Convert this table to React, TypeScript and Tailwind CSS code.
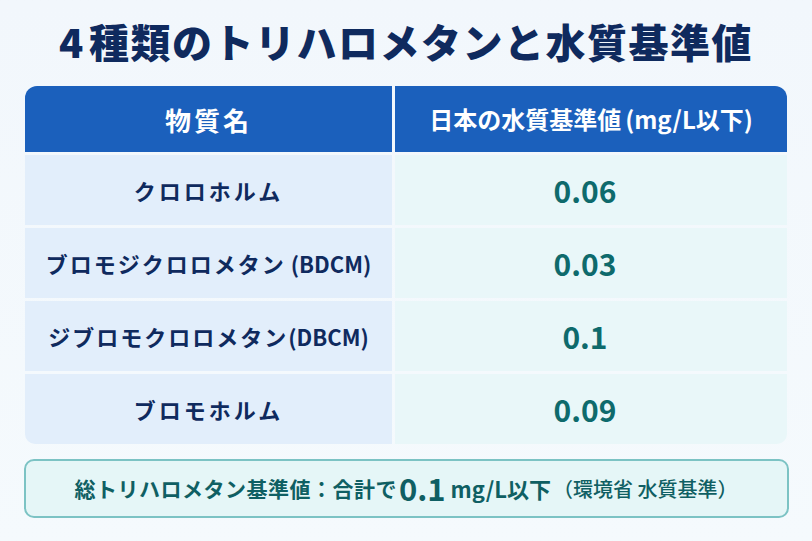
import React from "react";

const rows = [
  { name: "クロロホルム", suffix: "", value: "0.06", track: "tracking-[3px]" },
  { name: "ブロモジクロロメタン", suffix: " (BDCM)", value: "0.03", track: "tracking-[2px]" },
  { name: "ジブロモクロロメタン", suffix: "(DBCM)", value: "0.1", track: "tracking-[2px]" },
  { name: "ブロモホルム", suffix: "", value: "0.09", track: "tracking-[3px]" },
];

export default function App() {
  return (
    <div
      className="w-[812px] h-[541px] bg-gradient-to-b from-[#f2f7fc] to-[#f5fafd] flex flex-col items-center"
      style={{ fontFamily: '"Noto Sans CJK JP", "Noto Sans", sans-serif' }}
    >
      <h1 className="mt-[13px] h-[55px] flex items-center text-[40px] font-black tracking-[1.5px] text-[#0f2a5e] leading-none">
        <span className="mr-[4px]">4</span>種類のトリハロメタンと水質基準値
      </h1>
      <div className="mt-[18px] w-[762px] grid grid-cols-[367px_392px] gap-[3px]">
        <div className="h-[66px] bg-[#1b60bc] rounded-tl-[12px] flex items-center justify-center text-white font-bold text-[26px] tracking-[3px]">
          物質名
        </div>
        <div className="h-[66px] bg-[#1b60bc] rounded-tr-[12px] flex items-center justify-center text-white font-bold text-[24px]">
          日本の水質基準値<span className="ml-[4px]">(mg/L以下)</span>
        </div>
        {rows.map((r, i) => (
          <React.Fragment key={i}>
            <div
              className={
                "h-[70px] bg-[#e2eefb] flex items-center justify-center text-[#0f2a5e] font-bold text-[22px] " +
                (i === rows.length - 1 ? "rounded-bl-[10px]" : "")
              }
            >
              <span className={r.track}>{r.name}</span>
              {r.suffix && <span className="whitespace-pre">{r.suffix}</span>}
            </div>
            <div
              className={
                "h-[70px] bg-[#e9f7f9] flex items-center justify-center pr-[12px] text-[#0e6a6c] font-bold text-[30px] " +
                (i === rows.length - 1 ? "rounded-br-[10px]" : "")
              }
            >
              {r.value}
            </div>
          </React.Fragment>
        ))}
      </div>
      <div className="mt-[15px] w-[765px] h-[59px] border-2 border-[#7cc3c4] rounded-[10px] bg-[#e5f6f7] flex items-center justify-center text-[#0f5f63] font-bold">
        <span className="text-[21px] tracking-[0.5px]">総トリハロメタン基準値：合計で</span>
        <span className="text-[31px] ml-[2px] mr-[5px]">0.1</span>
        <span className="text-[22px]">mg/L以下</span>
        <span className="text-[20px] font-medium ml-[2px]">（環境省 水質基準）</span>
      </div>
    </div>
  );
}
